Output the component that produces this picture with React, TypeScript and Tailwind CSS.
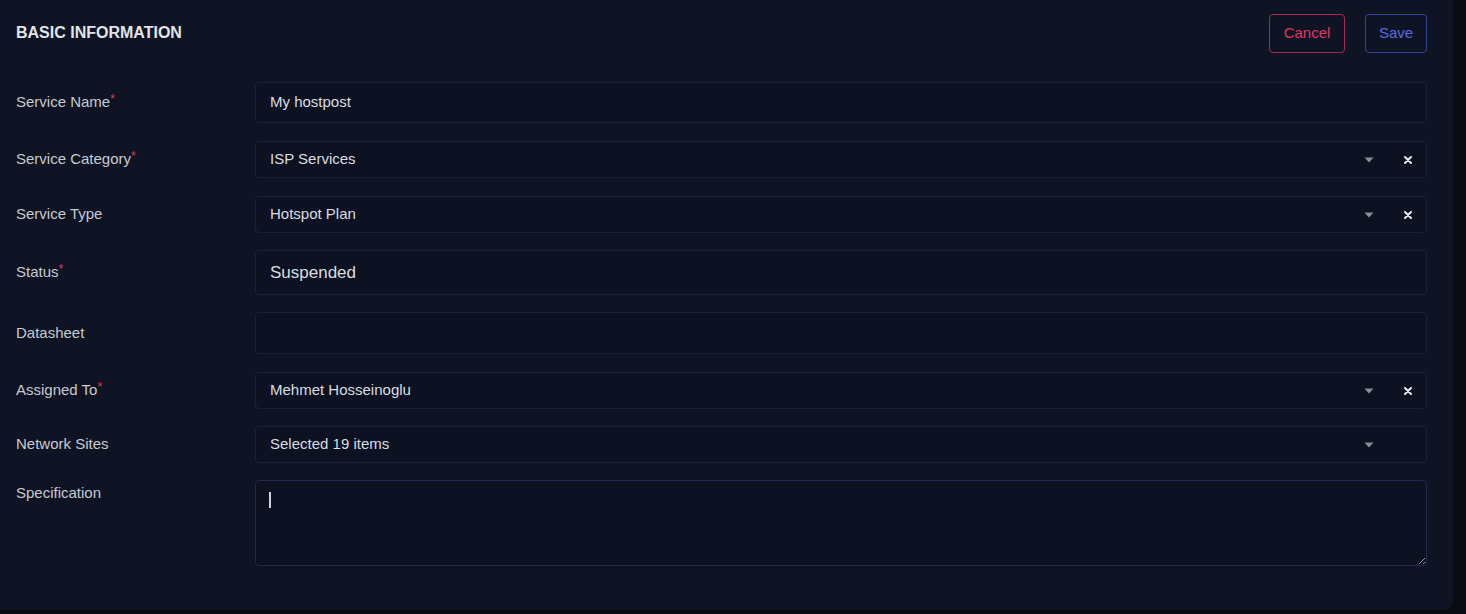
import React from 'react'

const font = { fontFamily: '"Liberation Sans", Arial, sans-serif' }

function Caret() {
  return (
    <svg width="10" height="6" viewBox="0 0 10 6" className="shrink-0">
      <path d="M0.5 0.5 L9.5 0.5 L5 5.5 Z" fill="#8b8e95" />
    </svg>
  )
}

function Clear() {
  return (
    <svg width="8" height="8" viewBox="0 0 8 8" className="shrink-0">
      <path d="M1 1 L7 7 M7 1 L1 7" stroke="#e6e8ec" strokeWidth="2" strokeLinecap="round" />
    </svg>
  )
}

function Label({ text, required }: { text: string; required?: boolean }) {
  return (
    <div className="w-[255px] shrink-0 pl-4 text-[15px] text-[#c7cad0]">
      {text}
      {required && <span className="text-[12px] text-[#e0365f] relative -top-[4px]">*</span>}
    </div>
  )
}

function SelectBox({ value, clearable = true }: { value: string; clearable?: boolean }) {
  return (
    <div className="flex-1 h-[37px] flex items-center rounded-[4px] border border-[#1a2234] bg-[#0c1221] pl-[14px] pr-[14px] text-[15px] text-[#dadde2]">
      <span className="flex-1">{value}</span>
      <Caret />
      <span className="w-[38px] flex justify-end">{clearable && <Clear />}</span>
    </div>
  )
}

export default function App() {
  return (
    <div className="min-h-screen bg-[#090c13]" style={font}>
      <div className="w-[1453px] h-[609px] rounded-br-lg bg-[#0e1424] pr-[26px]">
        {/* header */}
        <div className="flex justify-between pl-4 pt-[14px] h-[82px] items-start">
          <h1 className="text-[16px] font-bold text-[#e2e4e8] mt-[7px]">BASIC INFORMATION</h1>
          <div className="flex gap-5">
            <button className="h-[39px] w-[76px] rounded-[4px] border border-[#a8294b] text-[15px] text-[#e0365f]">
              Cancel
            </button>
            <button className="h-[39px] w-[62px] rounded-[4px] border border-[#39439a] text-[15px] text-[#5a6be0]">
              Save
            </button>
          </div>
        </div>

        <div className="flex flex-col">
          <div className="flex items-center">
            <Label text="Service Name" required />
            <div className="flex-1 h-[41px] flex items-center rounded-[4px] border border-[#1a2234] bg-[#0c1221] pl-[14px] text-[15px] text-[#dadde2]">
              My hostpost
            </div>
          </div>

          <div className="flex items-center mt-[18px]">
            <Label text="Service Category" required />
            <SelectBox value="ISP Services" />
          </div>

          <div className="flex items-center mt-[18px]">
            <Label text="Service Type" />
            <SelectBox value="Hotspot Plan" />
          </div>

          <div className="flex items-center mt-[17px]">
            <Label text="Status" required />
            <div className="flex-1 h-[45px] flex items-center rounded-[4px] border border-[#1a2234] bg-[#0c1221] pl-[14px] text-[17px] text-[#dadde2]">
              Suspended
            </div>
          </div>

          <div className="flex items-center mt-[17px]">
            <Label text="Datasheet" />
            <div className="flex-1 h-[42px] rounded-[4px] border border-[#1a2234] bg-[#0c1221]" />
          </div>

          <div className="flex items-center mt-[18px]">
            <Label text="Assigned To" required />
            <SelectBox value="Mehmet Hosseinoglu" />
          </div>

          <div className="flex items-center mt-[17px]">
            <Label text="Network Sites" />
            <SelectBox value="Selected 19 items" clearable={false} />
          </div>

          <div className="flex items-start mt-[17px]">
            <div className="pt-[2px]">
              <Label text="Specification" />
            </div>
            <div className="flex-1 relative">
              <textarea
                className="block w-full h-[86px] rounded-[4px] border border-[#1f2d4d] bg-[#0c1221] outline-none resize-y"
                style={{ colorScheme: 'dark' }}
              />
              <div className="absolute left-[14px] top-[12px] w-[1.5px] h-[16px] bg-[#cfd2d8]" />
            </div>
          </div>
        </div>
      </div>
    </div>
  )
}
